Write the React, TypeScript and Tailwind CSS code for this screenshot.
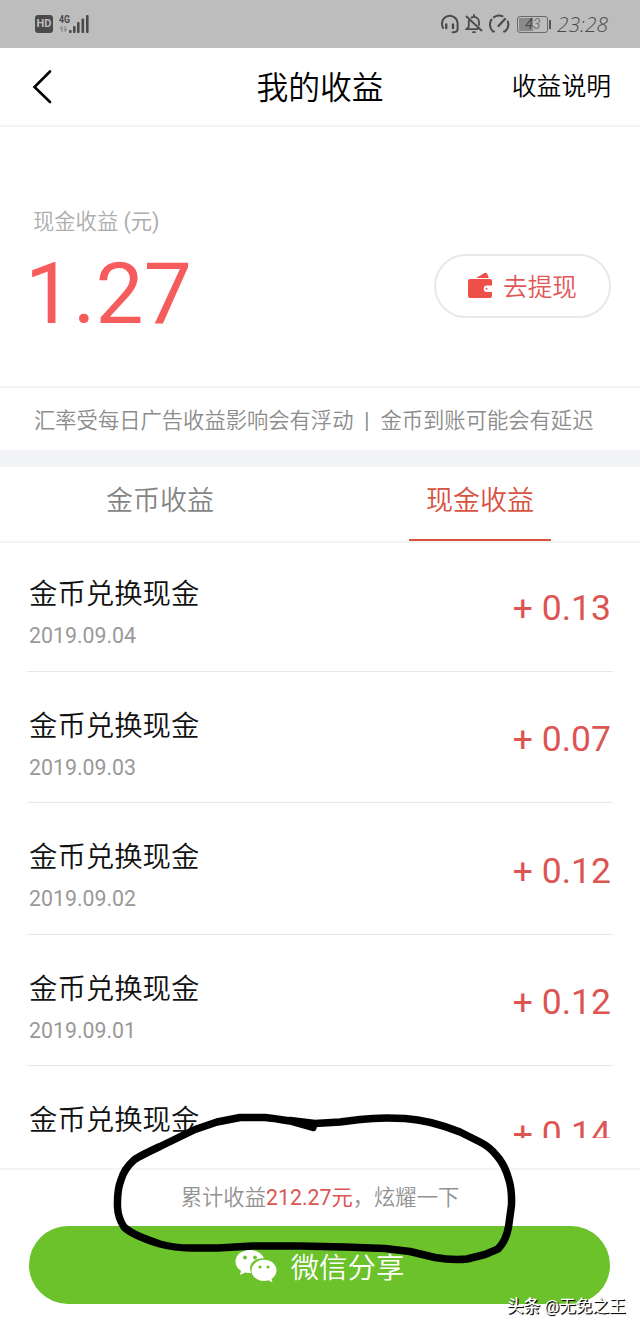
import React from 'react';

const records = [
  { date: '2019.09.04', amount: '+ 0.13' },
  { date: '2019.09.03', amount: '+ 0.07' },
  { date: '2019.09.02', amount: '+ 0.12' },
  { date: '2019.09.01', amount: '+ 0.12' },
  { date: '', amount: '+ 0.14' },
];

const StatusBar: React.FC = () => (
  <div className="flex h-12 shrink-0 items-center justify-between bg-[#bdbdbd] pl-[35px] pr-[32px] text-[#4a4a4a]">
    <div className="flex items-center gap-[6px]">
      <span className="flex h-[18px] w-[18px] items-center justify-center rounded-[3px] bg-[#4a4a4a] text-[11px] font-bold text-[#bdbdbd]">
        HD
      </span>
      {/* 4G */}
      <div className="flex h-[20px] items-end">
        <div className="flex h-full w-[10px] flex-col">
          <span className="origin-left scale-x-80 text-[11px] leading-[11px] font-bold">4G</span>
          <svg width="9" height="6" viewBox="0 0 9 6" className="mt-px" fill="none" stroke="#8a8a8a" strokeWidth="1.2">
            <path d="M3 6V1L1 3M6 0v5l2-2" />
          </svg>
        </div>
        <svg width="20" height="19" viewBox="0 0 20 19" fill="currentColor">
          <rect x="0" y="15" width="2.6" height="3" rx="1" />
          <rect x="4" y="11" width="2.6" height="7" rx="1" />
          <rect x="8" y="7" width="2.6" height="11" rx="1" />
          <rect x="12.5" y="3.5" width="2.6" height="14.5" rx="1" />
          <rect x="17" y="0" width="2.6" height="18" rx="1" />
        </svg>
      </div>
    </div>
    <div className="flex items-center">
      <svg width="18" height="20" viewBox="0 0 18 20" fill="none" stroke="currentColor" strokeWidth="2" strokeLinecap="round">
        <path d="M2 14Q1 12 1 9.500a7.800 7.800 0 0 1 15.600 0V15q0 3.300-5 3.300" />
        <path d="M5.200 10.500v3.500M12 10.500v3.500" strokeWidth="2.400" />
      </svg>
      <svg className="ml-[6px]" width="18" height="20" viewBox="0 0 18 20" fill="none" stroke="currentColor" strokeWidth="1.800" strokeLinecap="round">
        <path d="M1.500 2.500l15 14M3.800 7v5.500L1.500 15.200h11M6.500 3.600A5 5 0 0 1 14 7.500v3.500M9 1v1.500M8 18.200h2" />
      </svg>
      <svg className="ml-[5px]" width="22" height="20" viewBox="0 0 22 20" fill="none" stroke="currentColor" strokeWidth="2" strokeLinecap="round">
        <path d="M6 17.500H5A9.500 9.500 0 0 1 3.500 5.500M6 3.200A9.300 9.300 0 0 1 14.500 2.200M19.800 7.500A9.500 9.500 0 0 1 17 17.500h-1" />
        <path d="M10.500 12L17 5" strokeWidth="2.200" />
      </svg>
      <span className="ml-[7px] flex h-[17px] w-[31px] items-center rounded-[3px] border border-[#6b6b6b] p-px">
        <span className="flex h-full w-[14px] items-center justify-end bg-[#8a8a8a] text-[14px] italic">4</span>
        <span className="text-[14px] italic text-[#777]">3</span>
      </span>
      <span className="ml-px h-[9px] w-[2px] bg-[#555]" />
      <span className="ml-[6px] font-['Open_Sans'] text-[21px] font-light italic leading-none">23:28</span>
    </div>
  </div>
);

const Header: React.FC = () => (
  <header className="grid h-[79px] shrink-0 grid-cols-3 items-center border-b-2 border-[#f4f4f4] pl-[32px] pr-[29px]">
    <svg className="-mt-[2px]" width="21" height="36" viewBox="0 0 21 36" fill="none" stroke="#000" strokeWidth="2.600" strokeLinecap="round">
      <path d="M18 3.500L2.500 19L18 34" />
    </svg>
    <h1 className="-ml-[3px] pt-[5px] text-center text-[31.800px] leading-none font-[350]">我的收益</h1>
    <span className="pt-[2px] text-right text-[24.800px] leading-none font-[350]">收益说明</span>
  </header>
);

const Wallet: React.FC = () => (
  <svg width="26" height="28" viewBox="0 0 26 28" fill="#ee5048">
    <path d="M9 6L17.500 1q2-.8 2.800 1l1.500 4z" />
    <path fillRule="evenodd" d="M3 7h20q2 0 2 2v4.500h-5a3.200 3.200 0 0 0 0 6.500h5v4q0 2-2 2H3q-2 0-2-2V9q0-2 2-2z" />
    <circle cx="19.500" cy="16.700" r="1" />
  </svg>
);

const Wechat: React.FC = () => (
  <svg width="42" height="34" viewBox="0 0 42 34" fill="#fff">
    <path d="M15 0C6.500 0 .5 5 .5 11.500c0 4 2 7 5.500 9.300L5 25l5.300-2.600q3 .8 6 .6C12 14 20 8 29 8.300 27.500 3.500 22 0 15 0z" />
    <path d="M29 9.800c-7 0-12.500 4.700-12.500 10.600S22 31 29 31q2.300 0 4.500-.7l4 2.200-1-3.600c3-2 5-5 5-8.500C41.500 14.500 36 9.800 29 9.800z" />
    <g fill="#6bc22a">
      <circle cx="10" cy="7.500" r="1.900" />
      <circle cx="20" cy="7.500" r="1.900" />
      <circle cx="25" cy="17" r="1.600" />
      <circle cx="33" cy="17" r="1.600" />
    </g>
  </svg>
);

const App: React.FC = () => {
  return (
    <div className="relative flex h-[1330px] w-[640px] flex-col overflow-hidden bg-white font-[Roboto,'Noto_Sans_CJK_SC',sans-serif] text-black">
      <StatusBar />
      <Header />

      <section className="flex h-[261px] shrink-0 items-start justify-between border-b-2 border-[#f4f4f4] pl-[33px] pr-[29px]">
        <div className="pt-[80px]">
          <p className="text-[21.300px] leading-[30px] font-[350] text-[#adadad]">
            现金收益 <span className="font-normal">(元)</span>
          </p>
          <p className="-ml-[8px] mt-[11px] text-[85.500px] leading-[92px] text-[#f65c5c]">1.27</p>
        </div>
        <button className="mt-[127px] flex h-[64px] w-[177px] items-center justify-center gap-[10px] rounded-full border-2 border-[#e8e8e8] pr-px text-[24.600px] leading-none font-[350] text-[#e2575a]">
          <Wallet />
          <span className="pt-[5px]">去提现</span>
        </button>
      </section>

      <p className="flex h-[62px] shrink-0 items-center pt-[3px] pl-[34px] text-[21.300px] leading-none font-[350] whitespace-pre text-[#8c8c8c]">
        <span>汇率受每日广告收益影响会有浮动</span>
        <span className="w-[27px] text-center font-normal">|</span>
        <span>金币到账可能会有延迟</span>
      </p>
      <div className="h-[17px] shrink-0 bg-[#f2f4f7]" />

      <nav className="grid h-[76px] shrink-0 grid-cols-2 justify-items-center border-b-2 border-[#f4f4f4] text-[27px] font-[350]">
        <span className="pt-[14px] leading-[40px] text-[#858585]">金币收益</span>
        <span className="h-[74px] w-[142px] border-b-2 border-[#d8523f] pt-[14px] text-center leading-[40px] text-[#d8523f]">
          现金收益
        </span>
      </nav>

      <ul className="-mt-[3px] h-[598px] shrink-0 overflow-hidden px-[27px]">
        {records.map((item, i) => (
          <li key={i} className="flex h-[131.600px] items-start justify-between border-b border-[#e8e8e8] px-[2px]">
            <div className="pt-[35px]">
              <p className="text-[28.400px] leading-[40px] font-[350] text-[#111]">金币兑换现金</p>
              {item.date && <p className="mt-[6px] text-[21.300px] leading-[30px] text-[#999]">{item.date}</p>}
            </div>
            <span className="pt-[46.500px] text-[35.500px] leading-[42px] text-[#dc5553]">{item.amount}</span>
          </li>
        ))}
      </ul>

      <footer className="mt-[30px] flex flex-1 flex-col border-t-2 border-[#f4f4f4] px-[29px]">
        <p className="flex h-[56px] items-center justify-center text-[21.300px] leading-none font-[350] text-[#929292]">
          累计收益<span className="font-normal text-[#dc5553]">212.27元</span>，炫耀一下
        </p>
        <button className="flex h-[78px] w-[581px] items-center justify-center gap-[14px] rounded-full bg-[#6bc22a] pt-[3px] text-[28.400px] leading-none font-[350] text-white">
          <Wechat />
          <span className="pt-[5px]">微信分享</span>
        </button>
      </footer>

      {/* marker stroke */}
      <svg className="absolute left-0 top-[1090px]" width="640" height="240" viewBox="0 0 640 240" fill="none" stroke="#000" strokeWidth="7.500" strokeLinecap="round" strokeLinejoin="round">
        <path d="M313 37.500L290 31Q272 28 265 27.500L240 27.500L217 32L195 39.500L160 56.500C148 62 138 67 134 70Q124 79 121 90Q117 100 117.500 117Q118 128 124 137Q132 145 160 154Q175 158 190 158L218 158L252 156L300 156L345 157L385 158.500L410 161.500L435 167.500Q452 170.500 467 169L485 164.500L498 159Q506 151 508.500 137L511.500 115Q512 100 509 90Q505 75 497 66Q490 57 480 52L460 42Q430 30 405 28.500Q380 27 360 29.500L340 32L315 33.500L290 30.500" />
      </svg>

      <span className="absolute left-[507px] top-[1295px] text-[16.600px] leading-[24px] whitespace-nowrap text-white [text-shadow:1px_1px_0_#111,1px_1px_1px_#222]">
        <b className="font-medium">头条</b> @无免之王
      </span>
    </div>
  );
};

export default App;
